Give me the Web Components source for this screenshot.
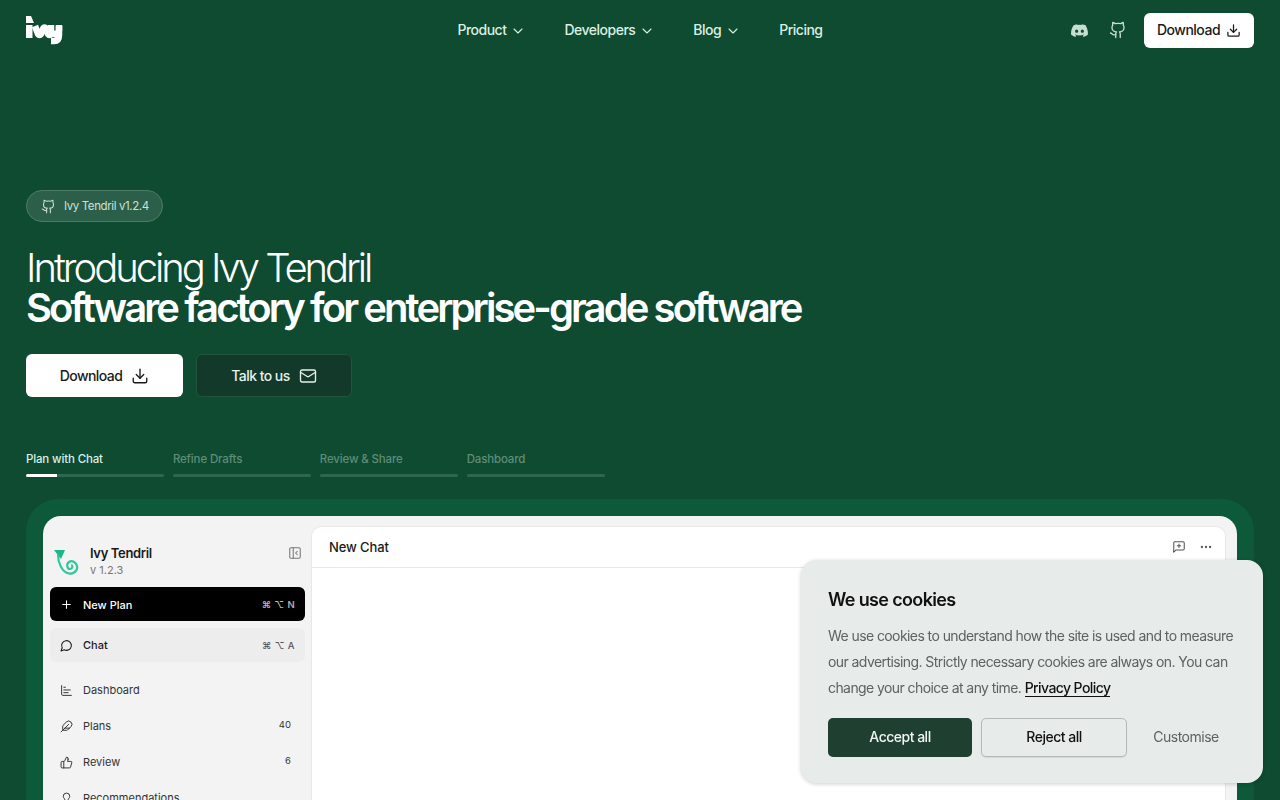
<!DOCTYPE html>
<html>
<head>
<meta charset="utf-8">
<title>Ivy Tendril</title>
<style>
  html, body { margin: 0; height: 800px; overflow: hidden; background: #0e4b31; }
  body { font-family: Inter, "Liberation Sans", sans-serif; }
</style>
</head>
<body>
<ivy-page>
  <site-nav></site-nav>
  <hero-section></hero-section>
  <step-tabs></step-tabs>
  <app-frame></app-frame>
</ivy-page>
<cookie-card></cookie-card>

<script>
const ICONS = {
  download: '<path d="M21 15v4a2 2 0 0 1-2 2H5a2 2 0 0 1-2-2v-4"/><path d="M7 10l5 5 5-5"/><path d="M12 15V3"/>',
  chevron: '<path d="M6 9l6 6 6-6"/>',
  github: '<path d="M15 22v-4a4.8 4.8 0 0 0-1-3.5c3 0 6-2 6-5.5.08-1.25-.27-2.48-1-3.5.28-1.15.28-2.35 0-3.5 0 0-1 0-3 1.5-2.64-.5-5.36-.5-8 0C6 2 5 2 5 2c-.3 1.15-.3 2.35 0 3.5A5.4 5.4 0 0 0 4 9c0 3.5 3 5.5 6 5.5-.39.49-.68 1.05-.85 1.65-.17.6-.22 1.23-.15 1.85v4"/><path d="M9 18c-4.51 2-5-2-7-2"/>',
  mail: '<rect x="2" y="4" width="20" height="16" rx="2"/><path d="M22 7l-8.97 5.7a1.94 1.94 0 0 1-2.06 0L2 7"/>',
  plus: '<path d="M5 12h14"/><path d="M12 5v14"/>',
  chat: '<path d="M7.9 20A9 9 0 1 0 4 16.1L2 22z"/>',
  chart: '<path d="M3 3v16a2 2 0 0 0 2 2h16"/><path d="M7 16h8"/><path d="M7 11h12"/><path d="M7 6h3"/>',
  feather: '<path d="M12.67 19a2 2 0 0 0 1.416-.588l6.154-6.172a6 6 0 0 0-8.49-8.49L5.586 9.914A2 2 0 0 0 5 11.328V18a1 1 0 0 0 1 1z"/><path d="M16 8L2 22"/><path d="M17.5 15H9"/>',
  thumb: '<path d="M7 10v12"/><path d="M15 5.88L14 10h5.83a2 2 0 0 1 1.92 2.56l-2.33 8A2 2 0 0 1 17.5 22H4a2 2 0 0 1-2-2v-8a2 2 0 0 1 2-2h2.76a2 2 0 0 0 1.79-1.11L12 2a3.13 3.13 0 0 1 3 3.88z"/>',
  bulb: '<path d="M15 14c.2-1 .7-1.7 1.5-2.5 1-.9 1.5-2.2 1.5-3.5A6 6 0 0 0 6 8c0 1 .2 2.2 1.5 3.5.7.7 1.3 1.5 1.5 2.5"/><path d="M9 18h6"/><path d="M10 22h4"/>',
  panel: '<rect x="3" y="3" width="18" height="18" rx="2"/><path d="M9 3v18"/><path d="M16 15l-3-3 3-3"/>',
  chatplus: '<path d="M21 15a2 2 0 0 1-2 2H7l-4 4V5a2 2 0 0 1 2-2h14a2 2 0 0 1 2 2z"/><path d="M12 7v6"/><path d="M9 10h6"/>',
  dots: '<circle cx="12" cy="12" r="1"/><circle cx="19" cy="12" r="1"/><circle cx="5" cy="12" r="1"/>'
};

function icon(name, size, width) {
  return `<svg width="${size}" height="${size}" viewBox="0 0 24 24" fill="none" stroke="currentColor" stroke-width="${width || 2}" stroke-linecap="round" stroke-linejoin="round">${ICONS[name]}</svg>`;
}

class IvyPage extends HTMLElement {
  connectedCallback() {
    this.attachShadow({ mode: 'open' });
    this.shadowRoot.innerHTML = `
      <style>
        :host { display: flex; flex-direction: column; padding: 0 26px; height: 800px; overflow: hidden; box-sizing: border-box; }
        ::slotted(*) { flex: none; }
      </style>
      <slot></slot>
    `;
  }
}

class SiteNav extends HTMLElement {
  connectedCallback() {
    this.attachShadow({ mode: 'open' });
    this.shadowRoot.innerHTML = `
      <style>
        :host { display: grid; grid-template-columns: 1fr auto 1fr; align-items: center; height: 60px; color: #dcefe4; font-size: 14px; font-weight: 500; letter-spacing: -0.5px; }
        .logo { display: block; }
        .links { display: flex; align-items: center; gap: 38.5px; margin-bottom: 2px; }
        .links span { display: flex; align-items: center; gap: 3.5px; }
        .links svg { margin-top: 3px; }
        .right { display: flex; align-items: center; justify-content: flex-end; }
        .icon { display: flex; color: #c6dfd1; margin-right: 21px; }
        .icon.gh { margin-right: 17px; }
        .btn { display: flex; align-items: center; gap: 6px; height: 35px; width: 110px; box-sizing: border-box; padding-bottom: 2px; justify-content: center; background: #fff; color: #1a1a1a; border-radius: 6px; }
        .btn svg { margin-top: 2px; }
      </style>
      <svg class="logo" width="37" height="30" viewBox="0 0 37 30" fill="none" stroke="#fff" stroke-width="6.500">
        <path d="M0 1h5l3 7H0z" fill="#fff" stroke="none"/>
        <path d="M0 10h6.500v13H0z" fill="#fff" stroke="none"/>
        <path d="M9 11l3 8q1.500 2 3 0l2-5q1.500-3 3 0l2 5q1.500 2 3 0"/>
        <path d="M25 10v5q0 4 4 4t4-4v-5"/>
        <path d="M33 11v9q0 6-5 6h-3"/>
      </svg>
      <div class="links">
        <span>Product ${icon('chevron', 16, 1.6)}</span>
        <span>Developers ${icon('chevron', 16, 1.6)}</span>
        <span>Blog ${icon('chevron', 16, 1.6)}</span>
        <span>Pricing</span>
      </div>
      <div class="right">
        <span class="icon">
          <svg width="17" height="17" viewBox="0 0 24 24" fill="currentColor"><path d="M20.3 4.4A19.8 19.8 0 0 0 15.4 3l-.6 1.2a18.3 18.3 0 0 0-5.600 0L8.600 3a19.700 19.700 0 0 0-4.900 1.500C.6 9.100-.3 13.600.2 18a19.900 19.900 0 0 0 6 3l1.300-2a12.900 12.900 0 0 1-2-1l.5-.4a14.200 14.200 0 0 0 12 0l.5.4c-.6.4-1.300.7-2 1l1.300 2a19.800 19.800 0 0 0 6-3c.5-5.100-.9-9.500-3.500-13.600zM8 15.300c-1.200 0-2.200-1.100-2.200-2.400s1-2.400 2.200-2.400 2.200 1.100 2.200 2.400-1 2.400-2.200 2.400zm8 0c-1.200 0-2.200-1.100-2.200-2.400s1-2.400 2.200-2.400 2.200 1.100 2.200 2.400-1 2.400-2.200 2.400z"/></svg>
        </span>
        <span class="icon gh">${icon('github', 18, 1.8)}</span>
        <span class="btn">Download ${icon('download', 15)}</span>
      </div>
    `;
  }
}

class HeroSection extends HTMLElement {
  connectedCallback() {
    this.attachShadow({ mode: 'open' });
    this.shadowRoot.innerHTML = `
      <style>
        :host { display: block; padding-top: 130px; color: #fff; }
        .badge { display: inline-flex; align-items: center; gap: 8px; box-sizing: border-box; height: 32px; width: 137px; padding-left: 14px; border-radius: 16px; background: #2b5f49; border: 1px solid #4d7b67; color: #cfe0d7; font-size: 11.5px; font-weight: 400; letter-spacing: -0.4px; }
        h1 { margin: 26px 0 0; font-size: 40px; line-height: 40px; letter-spacing: -3.05px; font-weight: 300; }
        h1 b { display: block; font-weight: 600; letter-spacing: -2.92px; }
        .actions { display: flex; gap: 13px; margin-top: 26px; font-size: 14px; font-weight: 500; letter-spacing: -0.55px; }
        .actions span { display: flex; align-items: center; justify-content: center; gap: 9px; height: 43px; box-sizing: border-box; border-radius: 6px; }
        .primary { width: 157px; background: #fff; color: #1a1a1a; }
        .secondary { width: 156px; background: #12392a; border: 1px solid #23543f; color: #e6f1eb; }
      </style>
      <span class="badge">${icon('github', 15, 1.7)} Ivy Tendril v1.2.4</span>
      <h1>Introducing Ivy Tendril<b>Software factory for enterprise-grade software</b></h1>
      <div class="actions">
        <span class="primary">Download ${icon('download', 18, 1.8)}</span>
        <span class="secondary">Talk to us ${icon('mail', 18, 1.8)}</span>
      </div>
    `;
  }
}

class StepTabs extends HTMLElement {
  connectedCallback() {
    this.attachShadow({ mode: 'open' });
    const tabs = ['Plan with Chat', 'Refine Drafts', 'Review &amp; Share', 'Dashboard'];
    this.shadowRoot.innerHTML = `
      <style>
        :host { display: flex; gap: 8.5px; width: 579px; margin-top: 55px; font-size: 11.5px; font-weight: 500; letter-spacing: -0.15px; color: #5f8d78; }
        div { flex: 1; }
        div:first-of-type { color: #dcefe4; }
        p { margin: 0 0 8px; line-height: 14px; }
        i { display: block; height: 3px; border-radius: 2px; background: #2f6650; overflow: hidden; }
        i::before { content: ""; display: block; height: 3px; width: 0; background: #fff; }
        div:first-of-type i::before { width: 31px; }
      </style>
      ${tabs.map(t => `<div><p>${t}</p><i></i></div>`).join('')}
    `;
  }
}

class AppFrame extends HTMLElement {
  connectedCallback() {
    this.attachShadow({ mode: 'open' });
    this.shadowRoot.innerHTML = `
      <style>
        :host { display: block; margin-top: 22px; padding: 17px 17px 0; height: 400px; box-sizing: border-box; background: #0d5a3b; border-radius: 32px 32px 0 0; }
        .window { display: flex; height: 100%; background: #f3f3f3; border-radius: 18px 18px 0 0; padding: 10px 11px 0 0; box-sizing: border-box; color: #1a1a1a; }
        .main { flex: 1; background: #fff; border: 1px solid #e8e8e8; border-bottom: 0; border-radius: 10px 10px 0 0; }
        .head { display: flex; align-items: center; height: 40px; padding: 0 12px 0 17px; border-bottom: 1px solid #e8e8e8; font-size: 13px; font-weight: 500; letter-spacing: -0.1px; }
        .head b { flex: 1; font-weight: 500; }
        .head span { display: flex; color: #555; margin-left: 13px; }
      </style>
      <div class="window">
        <app-sidebar></app-sidebar>
        <div class="main">
          <div class="head">
            <b>New Chat</b>
            <span>${icon('chatplus', 14, 1.8)}</span>
            <span>${icon('dots', 14, 2)}</span>
          </div>
        </div>
      </div>
    `;
  }
}

class AppSidebar extends HTMLElement {
  connectedCallback() {
    this.attachShadow({ mode: 'open' });
    const rows = [
      ['chart', 'Dashboard', ''],
      ['feather', 'Plans', '40'],
      ['thumb', 'Review', '6'],
      ['bulb', 'Recommendations', '']
    ];
    this.shadowRoot.innerHTML = `
      <style>
        :host { display: block; width: 268px; flex: none; box-sizing: border-box; padding: 0 6px 0 7px; font-size: 11px; font-weight: 500; overflow: hidden; }
        .brand { display: flex; align-items: flex-start; height: 53px; box-sizing: border-box; padding: 18px 3px 0 4px; margin-top: 1px; }
        .brand svg.mark { margin: 4px 11px 0 0; }
        .name { flex: 1; font-size: 13px; font-weight: 600; line-height: 17px; letter-spacing: -0.35px; }
        .ver { font-size: 11px; font-weight: 400; color: #777; line-height: 17px; letter-spacing: 0; }
        .panel { display: flex; color: #777; margin-top: 1px; }
        .row { display: flex; align-items: center; gap: 10px; padding: 0 10px 0 10px; height: 34px; border-radius: 6px; }
        .row em { font-style: normal; flex: 1; }
        .row small { font-size: 9.5px; letter-spacing: .4px; opacity: .75; }
        .new { background: #000; color: #fff; margin-top: 7px; }
        .new em { padding-top: 1px; }
        .chat { background: #ededed; margin-top: 7px; }
        .list { margin-top: 10px; }
        .list .row { height: 36px; font-weight: 400; color: #333; padding-right: 14px; }
        .list small { font-size: 9.5px; margin-top: -3px; opacity: 1; letter-spacing: 0; }
      </style>
      <div class="brand">
        <svg class="mark" width="25" height="27" viewBox="0 0 25 27" fill="none">
          <path d="M0 1h11L7 10z" fill="#1bb78a"/>
          <path d="M4 6C4 14 8 23 15 24.500 20 25.500 24 21 23 17 22 13 18 11 15 13 12 15 13 20 16 20 18 20 19 18 18 16.500" stroke="#2fc79b" stroke-width="2.200" stroke-linecap="round"/>
        </svg>
        <div class="name">Ivy Tendril<div class="ver">v 1.2.3</div></div>
        <span class="panel">${icon('panel', 14, 1.8)}</span>
      </div>
      <div class="row new">${icon('plus', 13)}<em>New Plan</em><small>⌘ ⌥ N</small></div>
      <div class="row chat">${icon('chat', 13, 2)}<em>Chat</em><small>⌘ ⌥ A</small></div>
      <div class="list">
        ${rows.map(r => `<div class="row">${icon(r[0], 13, 1.8)}<em>${r[1]}</em><small>${r[2]}</small></div>`).join('')}
      </div>
    `;
  }
}

class CookieCard extends HTMLElement {
  connectedCallback() {
    this.attachShadow({ mode: 'open' });
    this.shadowRoot.innerHTML = `
      <style>
        :host { display: block; position: fixed; left: 801px; top: 560px; width: 462px; height: 223px; box-sizing: border-box; padding: 28px 27px 0; background: #e7ebe9; border-radius: 16px; box-shadow: 0 1px 4px rgba(0,0,0,.2); color: #111; font-family: Inter, "Liberation Sans", sans-serif; }
        h2 { margin: 0; font-size: 18px; line-height: 24px; font-weight: 600; letter-spacing: -0.65px; }
        p { margin: 11px 0 0; font-size: 14px; line-height: 26px; color: #5c6360; letter-spacing: -0.58px; }
        a { color: #111; font-weight: 500; text-decoration: none; border-bottom: 1px solid #111; }
        .actions { display: flex; gap: 9px; margin-top: 17px; font-size: 14px; font-weight: 500; letter-spacing: -0.5px; }
        .actions span { display: flex; align-items: center; justify-content: center; height: 39px; width: 144px; box-sizing: border-box; padding-bottom: 2px; border-radius: 5px; }
        .accept { background: #1f3f30; color: #f2f6f4; }
        .reject { border: 1px solid #b3b9b6; width: 146px !important; box-shadow: 0 1px 1px rgba(0,0,0,.08); }
        .custom { color: #5c6360; font-weight: 400; width: 100px !important; }
      </style>
      <h2>We use cookies</h2>
      <p>We use cookies to understand how the site is used and to measure our advertising. Strictly necessary cookies are always on. You can change your choice at any time. <a>Privacy Policy</a></p>
      <div class="actions">
        <span class="accept">Accept all</span>
        <span class="reject">Reject all</span>
        <span class="custom">Customise</span>
      </div>
    `;
  }
}

customElements.define('ivy-page', IvyPage);
customElements.define('site-nav', SiteNav);
customElements.define('hero-section', HeroSection);
customElements.define('step-tabs', StepTabs);
customElements.define('app-frame', AppFrame);
customElements.define('app-sidebar', AppSidebar);
customElements.define('cookie-card', CookieCard);
</script>
</body>
</html>
